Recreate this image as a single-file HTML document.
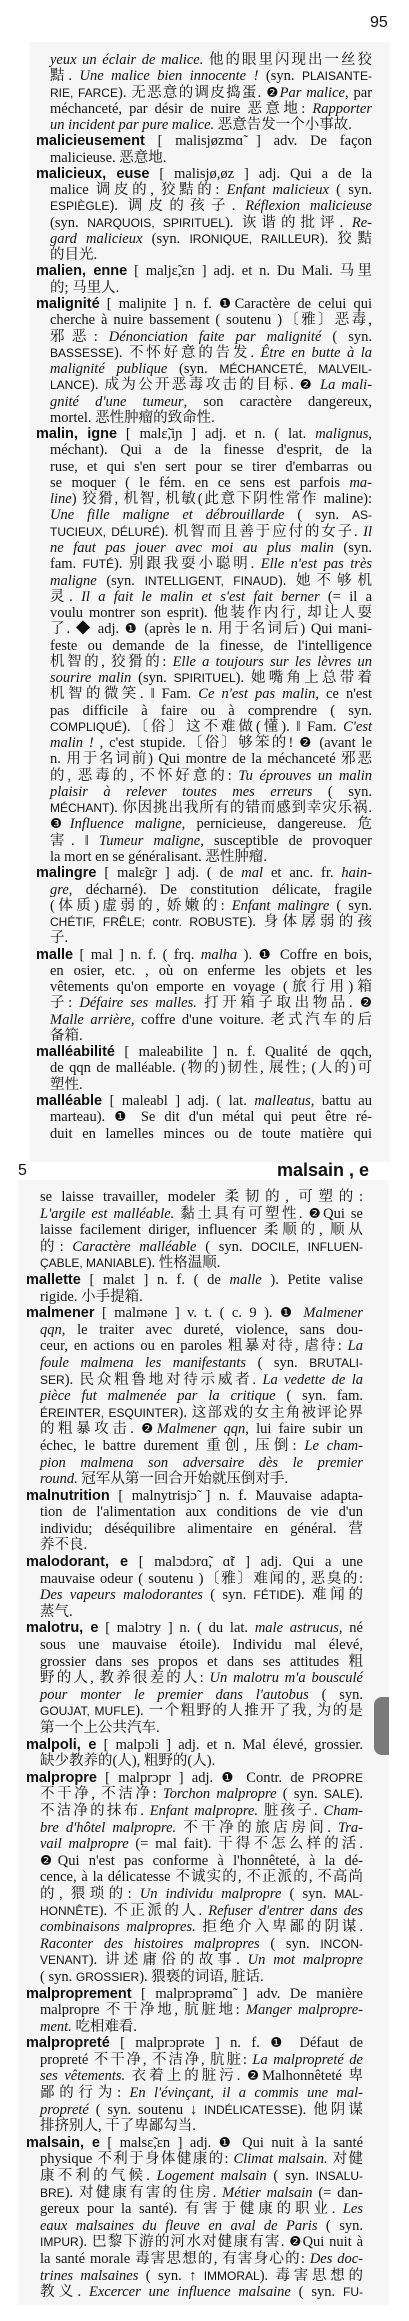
<!DOCTYPE html>
<html><head><meta charset="utf-8">
<style>
html,body{margin:0;padding:0;background:#fff;}
body{width:409px;height:2321px;position:relative;overflow:hidden;}
.p1{position:absolute;left:30px;top:42px;width:360px;height:1120px;background:#f6f6f6;}
.p2{position:absolute;left:18px;top:1180px;width:371px;height:1125px;background:#f6f6f6;}
.blk{position:absolute;font-family:"Liberation Serif","Noto Serif CJK SC",serif;font-size:14.5px;color:#111;}
.blk div{white-space:nowrap;overflow:visible;text-align:justify;text-align-last:justify;padding-left:14px;}
.blk div.l{text-align-last:left;}
.blk div.h{padding-left:0;}
.b{font-family:"Liberation Sans","Noto Sans CJK SC",sans-serif;font-weight:bold;font-size:14.5px;color:#111;}
.c{font-family:"Liberation Sans","Noto Sans CJK SC",sans-serif;font-size:12px;}
.n{font-family:"DejaVu Sans",sans-serif;font-size:13.5px;}
#t{left:36px;top:52px;width:336px;line-height:16.27px;}
#t div{height:16.27px;}
#u{left:26px;top:1189px;width:337px;line-height:16.6px;}
#u div{height:16.6px;}
.hd{position:absolute;font-family:"Liberation Sans",sans-serif;color:#111;}
</style></head><body>
<div class="p1"></div><div class="p2"></div>
<div class="hd" style="left:370px;top:14px;font-size:16px;">95</div>
<div class="hd" style="left:18px;top:1162px;font-size:16px;">5</div>
<div class="hd" style="left:277px;top:1160px;font-size:18px;font-weight:bold;">malsain , e</div>
<div style="position:absolute;left:374px;top:1697px;width:15px;height:58px;background:#7a7a7a;border-radius:8px 0 0 8px;"></div>

<div class="blk" id="t">
<div><i>yeux un éclair de malice.</i> 他的眼里闪现出一丝狡</div>
<div>黠. <i>Une malice bien innocente !</i> (syn. <span class="c">PLAISANTE-</span></div>
<div><span class="c">RIE, FARCE</span>). 无恶意的调皮捣蛋. <span class="n">❷</span><i>Par malice</i>, par</div>
<div>méchanceté, par désir de nuire 恶意地: <i>Rapporter</i></div>
<div class="l"><i>un incident par pure malice.</i> 恶意告发一个小事故.</div>
<div class="h"><span class="b">malicieusement</span> [ malisjøzmɑ̃ ] adv. De façon</div>
<div class="l">malicieuse. 恶意地.</div>
<div class="h"><span class="b">malicieux, euse</span> [ malisjø,øz ] adj. Qui a de la</div>
<div>malice 调皮的, 狡黠的: <i>Enfant malicieux</i> ( syn.</div>
<div><span class="c">ESPIÈGLE</span>). 调皮的孩子. <i>Réflexion malicieuse</i></div>
<div>(syn. <span class="c">NARQUOIS, SPIRITUEL</span>). 诙谐的批评. <i>Re-</i></div>
<div><i>gard malicieux</i> (syn. <span class="c">IRONIQUE, RAILLEUR</span>). 狡黠</div>
<div class="l">的目光.</div>
<div class="h"><span class="b">malien, enne</span> [ maljɛ̃,ɛn ] adj. et n. Du Mali. 马里</div>
<div class="l">的; 马里人.</div>
<div class="h"><span class="b">malignité</span> [ maliɲite ] n. f. <span class="n">❶</span>Caractère de celui qui</div>
<div>cherche à nuire bassement ( soutenu )〔雅〕恶毒,</div>
<div>邪恶: <i>Dénonciation faite par malignité</i> ( syn.</div>
<div><span class="c">BASSESSE</span>). 不怀好意的告发. <i>Être en butte à la</i></div>
<div><i>malignité publique</i> (syn. <span class="c">MÉCHANCETÉ, MALVEIL-</span></div>
<div><span class="c">LANCE</span>). 成为公开恶毒攻击的目标. <span class="n">❷</span> <i>La mali-</i></div>
<div><i>gnité d'une tumeur</i>, son caractère dangereux,</div>
<div class="l">mortel. 恶性肿瘤的致命性.</div>
<div class="h"><span class="b">malin, igne</span> [ malɛ̃,iɲ ] adj. et n. ( lat. <i>malignus</i>,</div>
<div>méchant). Qui a de la finesse d'esprit, de la</div>
<div>ruse, et qui s'en sert pour se tirer d'embarras ou</div>
<div>se moquer ( le fém. en ce sens est parfois <i>ma-</i></div>
<div><i>line</i>) 狡猾, 机智, 机敏(此意下阴性常作 maline):</div>
<div><i>Une fille maligne et débrouillarde</i> ( syn. <span class="c">AS-</span></div>
<div><span class="c">TUCIEUX, DÉLURÉ</span>). 机智而且善于应付的女子. <i>Il</i></div>
<div><i>ne faut pas jouer avec moi au plus malin</i> (syn.</div>
<div>fam. <span class="c">FUTÉ</span>). 别跟我耍小聪明. <i>Elle n'est pas très</i></div>
<div><i>maligne</i> (syn. <span class="c">INTELLIGENT, FINAUD</span>). 她不够机</div>
<div>灵. <i>Il a fait le malin et s'est fait berner</i> (= il a</div>
<div>voulu montrer son esprit). 他装作内行, 却让人耍</div>
<div>了. ◆ adj. <span class="n">❶</span> (après le n. 用于名词后) Qui mani-</div>
<div>feste ou demande de la finesse, de l'intelligence</div>
<div>机智的, 狡猾的: <i>Elle a toujours sur les lèvres un</i></div>
<div><i>sourire malin</i> (syn. <span class="c">SPIRITUEL</span>). 她嘴角上总带着</div>
<div>机智的微笑. ‖ Fam. <i>Ce n'est pas malin</i>, ce n'est</div>
<div>pas difficile à faire ou à comprendre ( syn.</div>
<div><span class="c">COMPLIQUÉ</span>).〔俗〕这不难做(懂). ‖ Fam. <i>C'est</i></div>
<div><i>malin !</i> , c'est stupide.〔俗〕够笨的! <span class="n">❷</span> (avant le</div>
<div>n. 用于名词前) Qui montre de la méchanceté 邪恶</div>
<div>的, 恶毒的, 不怀好意的: <i>Tu éprouves un malin</i></div>
<div><i>plaisir à relever toutes mes erreurs</i> ( syn.</div>
<div><span class="c">MÉCHANT</span>). 你因挑出我所有的错而感到幸灾乐祸.</div>
<div><span class="n">❸</span><i>Influence maligne</i>, pernicieuse, dangereuse. 危</div>
<div>害. ‖ <i>Tumeur maligne</i>, susceptible de provoquer</div>
<div class="l">la mort en se généralisant. 恶性肿瘤.</div>
<div class="h"><span class="b">malingre</span> [ malɛ̃gr ] adj. ( de <i>mal</i> et anc. fr. <i>hain-</i></div>
<div><i>gre</i>, décharné). De constitution délicate, fragile</div>
<div>(体质)虚弱的, 娇嫩的: <i>Enfant malingre</i> ( syn.</div>
<div><span class="c">CHÉTIF, FRÊLE; contr. ROBUSTE</span>). 身体孱弱的孩</div>
<div class="l">子.</div>
<div class="h"><span class="b">malle</span> [ mal ] n. f. ( frq. <i>malha</i> ). <span class="n">❶</span> Coffre en bois,</div>
<div>en osier, etc. , où on enferme les objets et les</div>
<div>vêtements qu'on emporte en voyage (旅行用)箱</div>
<div>子: <i>Défaire ses malles.</i> 打开箱子取出物品. <span class="n">❷</span></div>
<div><i>Malle arrière</i>, coffre d'une voiture. 老式汽车的后</div>
<div class="l">备箱.</div>
<div class="h"><span class="b">malléabilité</span> [ maleabilite ] n. f. Qualité de qqch,</div>
<div>de qqn de malléable. (物的)韧性, 展性; (人的)可</div>
<div class="l">塑性.</div>
<div class="h"><span class="b">malléable</span> [ maleabl ] adj. ( lat. <i>malleatus</i>, battu au</div>
<div>marteau). <span class="n">❶</span> Se dit d'un métal qui peut être ré-</div>
<div>duit en lamelles minces ou de toute matière qui</div>
</div>

<div class="blk" id="u">
<div>se laisse travailler, modeler 柔韧的, 可塑的:</div>
<div><i>L'argile est malléable.</i> 黏土具有可塑性. <span class="n">❷</span>Qui se</div>
<div>laisse facilement diriger, influencer 柔顺的, 顺从</div>
<div>的: <i>Caractère malléable</i> ( syn. <span class="c">DOCILE, INFLUEN-</span></div>
<div class="l"><span class="c">ÇABLE, MANIABLE</span>). 性格温顺.</div>
<div class="h"><span class="b">mallette</span> [ malɛt ] n. f. ( de <i>malle</i> ). Petite valise</div>
<div class="l">rigide. 小手提箱.</div>
<div class="h"><span class="b">malmener</span> [ malməne ] v. t. ( c. 9 ). <span class="n">❶</span> <i>Malmener</i></div>
<div><i>qqn</i>, le traiter avec dureté, violence, sans dou-</div>
<div>ceur, en actions ou en paroles 粗暴对待, 虐待: <i>La</i></div>
<div><i>foule malmena les manifestants</i> ( syn. <span class="c">BRUTALI-</span></div>
<div><span class="c">SER</span>). 民众粗鲁地对待示威者. <i>La vedette de la</i></div>
<div><i>pièce fut malmenée par la critique</i> ( syn. fam.</div>
<div><span class="c">ÉREINTER, ESQUINTER</span>). 这部戏的女主角被评论界</div>
<div>的粗暴攻击. <span class="n">❷</span><i>Malmener qqn</i>, lui faire subir un</div>
<div>échec, le battre durement 重创, 压倒: <i>Le cham-</i></div>
<div><i>pion malmena son adversaire dès le premier</i></div>
<div class="l"><i>round.</i> 冠军从第一回合开始就压倒对手.</div>
<div class="h"><span class="b">malnutrition</span> [ malnytrisjɔ̃ ] n. f. Mauvaise adapta-</div>
<div>tion de l'alimentation aux conditions de vie d'un</div>
<div>individu; déséquilibre alimentaire en général. 营</div>
<div class="l">养不良.</div>
<div class="h"><span class="b">malodorant, e</span> [ malɔdɔrɑ̃, ɑ̃t ] adj. Qui a une</div>
<div>mauvaise odeur ( soutenu )〔雅〕难闻的, 恶臭的:</div>
<div><i>Des vapeurs malodorantes</i> ( syn. <span class="c">FÉTIDE</span>). 难闻的</div>
<div class="l">蒸气.</div>
<div class="h"><span class="b">malotru, e</span> [ malɔtry ] n. ( du lat. <i>male astrucus</i>, né</div>
<div>sous une mauvaise étoile). Individu mal élevé,</div>
<div>grossier dans ses propos et dans ses attitudes 粗</div>
<div>野的人, 教养很差的人: <i>Un malotru m'a bousculé</i></div>
<div><i>pour monter le premier dans l'autobus</i> ( syn.</div>
<div><span class="c">GOUJAT, MUFLE</span>). 一个粗野的人推开了我, 为的是</div>
<div class="l">第一个上公共汽车.</div>
<div class="h"><span class="b">malpoli, e</span> [ malpɔli ] adj. et n. Mal élevé, grossier.</div>
<div class="l">缺少教养的(人), 粗野的(人).</div>
<div class="h"><span class="b">malpropre</span> [ malprɔpr ] adj. <span class="n">❶</span> Contr. de <span class="c">PROPRE</span></div>
<div>不干净, 不洁净: <i>Torchon malpropre</i> ( syn. <span class="c">SALE</span>).</div>
<div>不洁净的抹布. <i>Enfant malpropre.</i> 脏孩子. <i>Cham-</i></div>
<div><i>bre d'hôtel malpropre.</i> 不干净的旅店房间. <i>Tra-</i></div>
<div><i>vail malpropre</i> (= mal fait). 干得不怎么样的活.</div>
<div><span class="n">❷</span>Qui n'est pas conforme à l'honnêteté, à la dé-</div>
<div>cence, à la délicatesse 不诚实的, 不正派的, 不高尚</div>
<div>的, 猥琐的: <i>Un individu malpropre</i> ( syn. <span class="c">MAL-</span></div>
<div><span class="c">HONNÊTE</span>). 不正派的人. <i>Refuser d'entrer dans des</i></div>
<div><i>combinaisons malpropres.</i> 拒绝介入卑鄙的阴谋.</div>
<div><i>Raconter des histoires malpropres</i> ( syn. <span class="c">INCON-</span></div>
<div><span class="c">VENANT</span>). 讲述庸俗的故事. <i>Un mot malpropre</i></div>
<div class="l">( syn. <span class="c">GROSSIER</span>). 猥亵的词语, 脏话.</div>
<div class="h"><span class="b">malproprement</span> [ malprɔprəmɑ̃ ] adv. De manière</div>
<div>malpropre 不干净地, 肮脏地: <i>Manger malpropre-</i></div>
<div class="l"><i>ment.</i> 吃相难看.</div>
<div class="h"><span class="b">malpropreté</span> [ malprɔprəte ] n. f. <span class="n">❶</span> Défaut de</div>
<div>propreté 不干净, 不洁净, 肮脏: <i>La malpropreté de</i></div>
<div><i>ses vêtements.</i> 衣着上的脏污. <span class="n">❷</span>Malhonnêteté 卑</div>
<div>鄙的行为: <i>En l'évinçant, il a commis une mal-</i></div>
<div><i>propreté</i> ( syn. soutenu ↓ <span class="c">INDÉLICATESSE</span>). 他阴谋</div>
<div class="l">排挤别人, 干了卑鄙勾当.</div>
<div class="h"><span class="b">malsain, e</span> [ malsɛ̃,ɛn ] adj. <span class="n">❶</span> Qui nuit à la santé</div>
<div>physique 不利于身体健康的: <i>Climat malsain.</i> 对健</div>
<div>康不利的气候. <i>Logement malsain</i> ( syn. <span class="c">INSALU-</span></div>
<div><span class="c">BRE</span>). 对健康有害的住房. <i>Métier malsain</i> (= dan-</div>
<div>gereux pour la santé). 有害于健康的职业. <i>Les</i></div>
<div><i>eaux malsaines du fleuve en aval de Paris</i> ( syn.</div>
<div><span class="c">IMPUR</span>). 巴黎下游的河水对健康有害. <span class="n">❷</span>Qui nuit à</div>
<div>la santé morale 毒害思想的, 有害身心的: <i>Des doc-</i></div>
<div><i>trines malsaines</i> ( syn. ↑ <span class="c">IMMORAL</span>). 毒害思想的</div>
<div>教义. <i>Excercer une influence malsaine</i> ( syn. <span class="c">FU-</span></div>
</div>
</body></html>
